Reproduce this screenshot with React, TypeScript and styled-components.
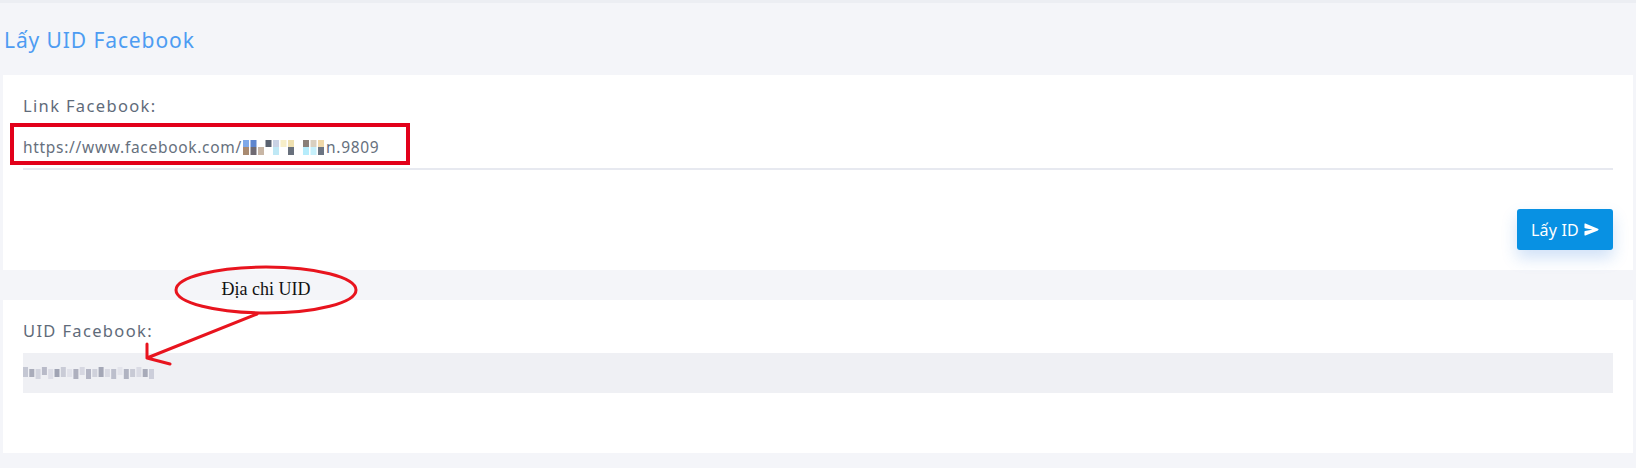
import React from 'react';
import styled, { createGlobalStyle } from 'styled-components';
import { IoSend } from 'react-icons/io5';

const colors = {
  page: '#f4f5f9',
  card: '#ffffff',
  title: '#4d9cf2',
  label: '#5f6b7a',
  text: '#66707d',
  line: '#e7e9f0',
  output: '#eff0f4',
  button: '#0891e3',
  mark: '#e2001a',
  note: '#e8141e',
};

const GlobalStyle = createGlobalStyle`
  html, body {
    margin: 0;
    padding: 0;
    background: ${colors.page};
    font-family: 'Noto Sans', 'Open Sans', sans-serif;
  }
`;

const Page = styled.div`
  position: relative;
  min-height: 468px;
  padding: 0 3px 15px;
  box-sizing: border-box;
  border-top: 3px solid #eceef3;
`;

const Header = styled.h1`
  margin: 0;
  height: 72px;
  padding: 23px 0 0 1px;
  box-sizing: border-box;
  font-size: 21px;
  line-height: 28px;
  font-weight: 400;
  letter-spacing: 0.9px;
  color: ${colors.title};
`;

const Card = styled.section<{ $bottom: number }>`
  background: ${colors.card};
  padding: 20px 20px ${(p) => p.$bottom}px;
  display: flex;
  flex-direction: column;
`;

const Gap = styled.div`
  height: 30px;
`;

const Label = styled.label`
  font-size: 16.5px;
  line-height: 22px;
  letter-spacing: 1.35px;
  color: ${colors.label};
`;

const Field = styled.div`
  position: relative;
  margin-top: 8px;
  height: 43px;
  border-bottom: 2px solid ${colors.line};
  display: flex;
  align-items: center;
  font-size: 15.5px;
  letter-spacing: 0.7px;
  color: ${colors.text};
`;

const Highlight = styled.span`
  position: absolute;
  left: -13px;
  top: -2px;
  width: 400px;
  height: 42px;
  border: 4px solid ${colors.mark};
  box-sizing: border-box;
  pointer-events: none;
`;

const Mosaic = styled.svg`
  display: block;
  flex: none;
`;

const Actions = styled.div`
  display: flex;
  justify-content: flex-end;
  margin-top: 39px;
`;

const Button = styled.button`
  display: flex;
  align-items: center;
  gap: 5px;
  width: 96px;
  height: 41px;
  justify-content: center;
  border: 0;
  border-radius: 3px;
  background: ${colors.button};
  color: #fff;
  font-family: inherit;
  font-size: 16px;
  letter-spacing: 0.2px;
  box-shadow: 0 8px 16px rgba(40, 120, 220, 0.22);
  cursor: pointer;
`;

const Output = styled.div`
  margin-top: 11px;
  height: 40px;
  background: ${colors.output};
  display: flex;
  align-items: center;
`;

const Note = styled.svg`
  position: absolute;
  left: 140px;
  top: 255px;
  overflow: visible;
  pointer-events: none;
`;

const urlBlocks = [
  '#7fa9e8', '#5f86cf', '#ffffff', '#5a6270', '#c9d2e4', '#f7eec8', '#efe0b0', '#ffffff',
  '#8a7f78', '#d9cfbf', '#f0d8a8', '#a98a70', '#6f6a72', '#c8b6a5', '#ffffff', '#bfe8f5',
  '#ffffff', '#68707c', '#ffffff', '#b6ecfb', '#c6f0fb', '#6b7482',
];

const uidBlocks = [
  '#c4c7d3', '#a9acba', '#d2d4de', '#b8bac8', '#dcdde6', '#9fa3b3', '#c9cbd6', '#e1e2ea',
  '#aeb0be', '#d6d7e1', '#b3b5c4', '#cfd1db', '#a4a7b6', '#d9dae3', '#bcbfcc', '#e3e4eb',
  '#b0b3c1', '#c8cad5', '#dadbe4', '#a8abb9', '#ccceda',
];

export default function App() {
  return (
    <>
      <GlobalStyle />
      <Page>
        <Header>Lấy UID Facebook</Header>

        <Card $bottom={20}>
          <Label>Link Facebook:</Label>
          <Field>
            <span>https://www.facebook.com/</span>
            <Mosaic width="84" height="18" viewBox="0 0 84 18">
              {urlBlocks.map((c, i) => (
                <rect
                  key={i}
                  x={(i % 11) * 7.5 + 1}
                  y={i < 11 ? 2 : 9}
                  width="6"
                  height={i < 11 ? 7 : 8}
                  fill={c}
                />
              ))}
            </Mosaic>
            <span>n.9809</span>
            <Highlight />
          </Field>
          <Actions>
            <Button>
              Lấy ID <IoSend size={15} />
            </Button>
          </Actions>
        </Card>

        <Gap />

        <Card $bottom={60}>
          <Label>UID Facebook:</Label>
          <Output>
            <Mosaic width="134" height="14" viewBox="0 0 134 14">
              {uidBlocks.map((c, i) => (
                <rect
                  key={i}
                  x={i * 6.3}
                  y={i % 3 === 0 ? 1 : 3}
                  width="5"
                  height={i % 2 ? 8 : 10}
                  fill={c}
                />
              ))}
            </Mosaic>
          </Output>
        </Card>

        <Note width="240" height="115" viewBox="0 0 240 115">
          <ellipse cx="126" cy="32" rx="90" ry="23" fill="none" stroke={colors.note} strokeWidth="3" />
          <text
            x="126"
            y="37"
            textAnchor="middle"
            fontFamily="'Liberation Serif', serif"
            fontSize="18"
            fill="#111"
          >
            Địa chi UID
          </text>
          <path
            d="M117 56 L7 100 M7 100 L7 86 M7 100 L30 106"
            fill="none"
            stroke={colors.note}
            strokeWidth="3"
            strokeLinecap="round"
          />
        </Note>
      </Page>
    </>
  );
}
